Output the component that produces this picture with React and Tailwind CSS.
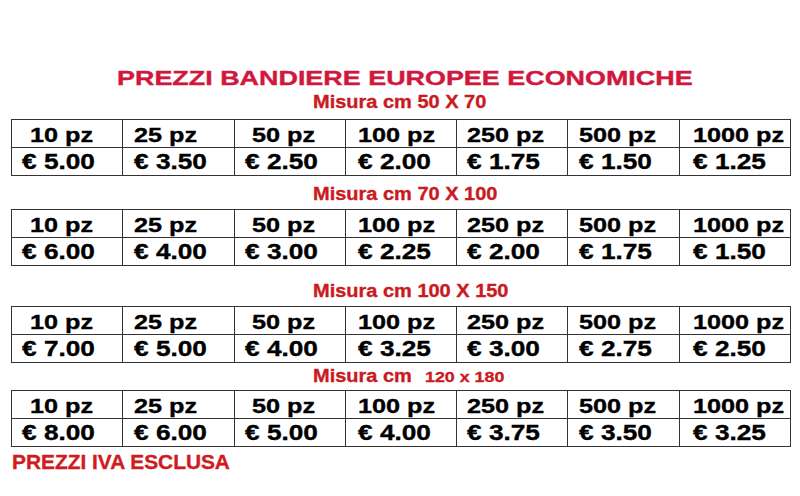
import React from "react";

const headers = ["10 pz", "25 pz", "50 pz", "100 pz", "250 pz", "500 pz", "1000 pz"];
const hPad = ["pl-[18px]", "pl-[11px]", "pl-[17px]", "pl-[12px]", "pl-[10px]", "pl-[11px]", "pl-[13px]"];
const pPad = ["pl-[10px]", "pl-[11px]", "pl-[10px]", "pl-[12px]", "pl-[10px]", "pl-[11px]", "pl-[13px]"];

const tables = [
  ["€ 5.00", "€ 3.50", "€ 2.50", "€ 2.00", "€ 1.75", "€ 1.50", "€ 1.25"],
  ["€ 6.00", "€ 4.00", "€ 3.00", "€ 2.25", "€ 2.00", "€ 1.75", "€ 1.50"],
  ["€ 7.00", "€ 5.00", "€ 4.00", "€ 3.25", "€ 3.00", "€ 2.75", "€ 2.50"],
  ["€ 8.00", "€ 6.00", "€ 5.00", "€ 4.00", "€ 3.75", "€ 3.50", "€ 3.25"],
];

function PriceTable({ prices }) {
  return (
    <div className="ml-[11px] w-[780px] grid grid-cols-7 gap-px border border-[#333] bg-[#333]">
      {headers.map((h, i) => (
        <div key={"h" + i} className={"h-[27px] bg-white whitespace-nowrap text-[20.5px] leading-[30px] " + hPad[i]}>
          <span className="inline-block origin-left scale-x-[1.23]">{h}</span>
        </div>
      ))}
      {prices.map((p, i) => (
        <div key={"p" + i} className={"h-[27px] bg-white whitespace-nowrap text-[21.5px] leading-[28px] " + pPad[i]}>
          <span className="inline-block origin-left scale-x-[1.22]">{p}</span>
        </div>
      ))}
    </div>
  );
}

function Misura({ text, className }) {
  return (
    <div className={"whitespace-nowrap pl-[313px] text-[18px] leading-[20px] text-[#c91b1f] " + className}>
      <span className="inline-block origin-left scale-x-[1.11]">{text}</span>
    </div>
  );
}

export default function App() {
  return (
    <div
      className="w-[800px] h-[496px] bg-white overflow-hidden font-bold text-black [-webkit-text-stroke:0.35px]"
      style={{ fontFamily: '"Liberation Sans", Arial, sans-serif' }}
    >
      <div className="pt-[64px]">
        <div className="h-[28px] whitespace-nowrap pl-[117px] text-[19.5px] leading-[28px] text-[#d0183e]">
          <span className="inline-block origin-left scale-x-[1.38]">PREZZI BANDIERE EUROPEE ECONOMICHE</span>
        </div>
        <Misura text="Misura cm 50 X 70" className="h-[27px]" />
        <PriceTable prices={tables[0]} />
        <Misura text="Misura cm 70 X 100" className="h-[33px] pt-[8px]" />
        <PriceTable prices={tables[1]} />
        <Misura text="Misura cm 100 X 150" className="h-[40px] pt-[15px]" />
        <PriceTable prices={tables[2]} />
        <div className="h-[27px] pt-[3px] whitespace-nowrap pl-[313px] leading-[20px] text-[#c91b1f]">
          <span className="inline-block origin-left scale-x-[1.11] text-[18px]">Misura cm</span>
          <span className="ml-[23px] inline-block origin-left scale-x-[1.15] text-[15.5px]">120 x 180</span>
        </div>
        <PriceTable prices={tables[3]} />
        <div className="pt-[5px] whitespace-nowrap pl-[12px] text-[19.5px] leading-[20px] text-[#d01b22]">
          <span className="inline-block origin-left scale-x-[1.07]">PREZZI IVA ESCLUSA</span>
        </div>
      </div>
    </div>
  );
}
